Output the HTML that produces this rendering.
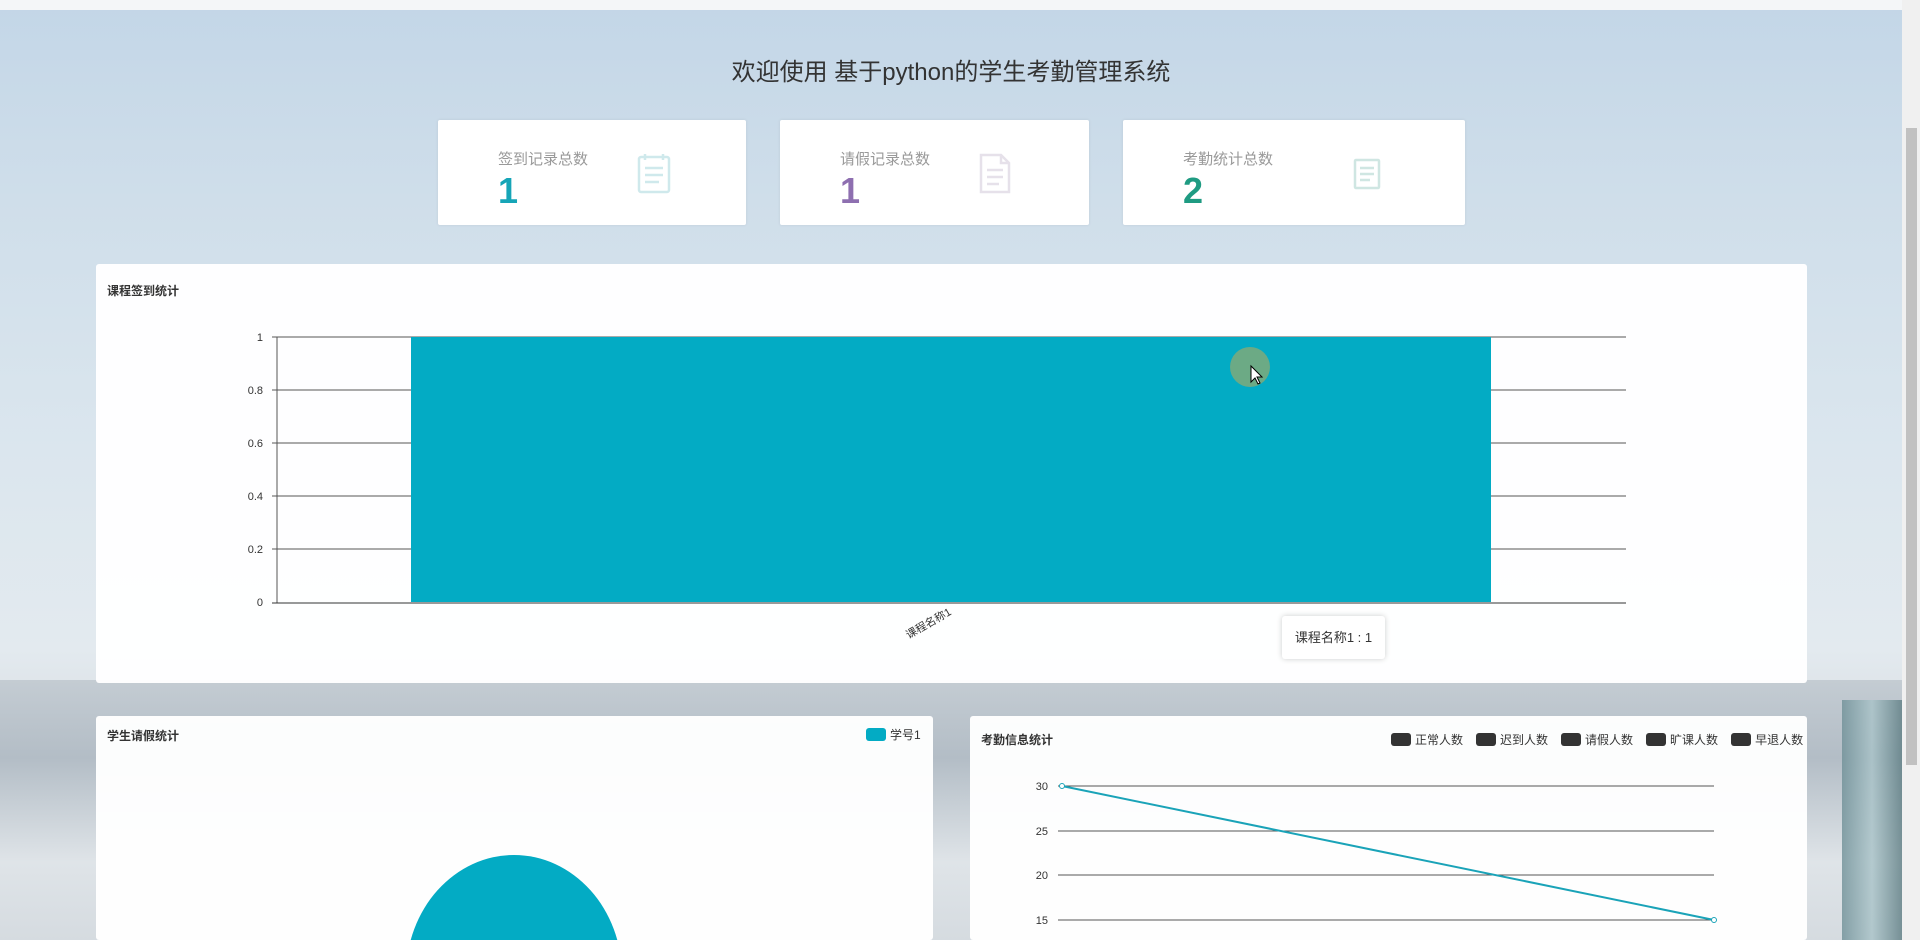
<!DOCTYPE html>
<html><head><meta charset="utf-8"><style>
*{margin:0;padding:0;box-sizing:border-box}
html,body{width:1920px;height:940px;overflow:hidden}
body{position:relative;font-family:"Liberation Sans","Noto Sans CJK SC",sans-serif;
background:linear-gradient(180deg,#c3d6e7 0px,#cfdeea 200px,#dbe6ee 450px,#e3eaef 650px,#dde3e8 700px,#d3d9de 940px)}
.top{position:absolute;left:0;top:0;width:1902px;height:10px;background:#f4f6f8}
.city{position:absolute;left:0;top:680px;width:1902px;height:260px;background:linear-gradient(180deg,#c4ccd3,#b3bdc6 30%,#dfe4e8 70%,#d5dbe0)}
.tw{position:absolute;right:18px;top:700px;width:60px;height:240px;background:linear-gradient(90deg,#6f9097,#a9c3c8,#5e7d83);opacity:.8}
h1{position:absolute;top:52px;left:0;width:1902px;text-align:center;font-size:24px;font-weight:normal;color:#333}
.card{position:absolute;top:120px;height:105px;background:#fff;border-radius:2px;box-shadow:0 0 3px rgba(0,0,0,.08)}
.card .l{position:absolute;left:60px;top:28px;font-size:15px;color:#999}
.card .n{position:absolute;left:60px;top:50px;font-size:36px;font-weight:bold}
.card svg{position:absolute;top:32px}
.panel{position:absolute;background:rgba(255,255,255,.96);border-radius:3px}
.pt{position:absolute;font-size:12px;font-weight:bold;color:#333}
.sb{position:absolute;right:0;top:0;width:18px;height:940px;background:#f0f0f0}
.sb div{position:absolute;left:4px;top:128px;width:11px;height:637px;background:#c1c1c1}
.lg{position:absolute;font-size:12px;color:#333;display:flex;align-items:center;white-space:nowrap}
.lg i{display:inline-block;width:20px;height:13px;border-radius:3px;background:#333;margin:0 4px 0 0}
.lg b{display:inline-block;width:13px}
</style></head><body>
<div class="top"></div>
<div class="city"></div>
<div class="tw"></div>
<h1>欢迎使用 基于python的学生考勤管理系统</h1>

<div class="card" style="left:438px;width:308px"><div class="l">签到记录总数</div><div class="n" style="color:#16a5b7">1</div>
<svg style="left:198px" width="36" height="42" viewBox="0 0 36 42" fill="none" stroke="#cfe9ec" stroke-width="2.5"><rect x="3" y="5" width="30" height="35" rx="2"/><path d="M9 2v6M27 2v6M9 16h18M9 23h18M9 30h14"/></svg></div>
<div class="card" style="left:780px;width:309px"><div class="l">请假记录总数</div><div class="n" style="color:#8e6fb0">1</div>
<svg style="left:198px" width="34" height="42" viewBox="0 0 34 42" fill="none" stroke="#e6e1ea" stroke-width="2.5"><path d="M3 3h20l8 8v29H3z M23 3v8h8 M9 18h16M9 25h16M9 32h12"/></svg></div>
<div class="card" style="left:1123px;width:342px"><div class="l">考勤统计总数</div><div class="n" style="color:#1f9b82">2</div>
<svg style="left:230px;top:38px" width="28" height="32" viewBox="0 0 28 32" fill="none" stroke="#cfe6e2" stroke-width="2.5"><rect x="2" y="2" width="24" height="28" rx="1"/><path d="M7 10h14M7 16h14M7 22h10"/></svg></div>

<div class="panel" style="left:96px;top:264px;width:1711px;height:419px">
<div class="pt" style="left:11px;top:18px">课程签到统计</div>
</div>
<svg style="position:absolute;left:0;top:0" width="1920" height="940">
<g stroke="#555" stroke-width="1">
<line x1="272" y1="337" x2="1626" y2="337"/><line x1="272" y1="390" x2="1626" y2="390"/><line x1="272" y1="443" x2="1626" y2="443"/><line x1="272" y1="496" x2="1626" y2="496"/><line x1="272" y1="549" x2="1626" y2="549"/>
<line x1="277" y1="337" x2="277" y2="603"/>
</g>
<rect x="411" y="337" width="1080" height="265" fill="#03abc4"/>
<line x1="272" y1="603" x2="1626" y2="603" stroke="#333"/>
<g font-size="11" fill="#333" text-anchor="end" font-family="Liberation Sans,sans-serif">
<text x="263" y="341">1</text><text x="263" y="394">0.8</text><text x="263" y="447">0.6</text><text x="263" y="500">0.4</text><text x="263" y="553">0.2</text><text x="263" y="606">0</text>
<text x="952" y="614" transform="rotate(-30 952 614)" font-family="Liberation Sans,Noto Sans CJK SC,sans-serif">课程名称1</text>
</g>
<circle cx="1250" cy="367" r="20" fill="#7fa97a" opacity=".85"/>
<path d="M1251 366l0 16 4-4 3 6 2-1-3-6 5 0z" fill="#fff" stroke="#000" stroke-width="1"/>
</svg>
<div style="position:absolute;left:1282px;top:616px;width:103px;height:43px;background:#fff;box-shadow:0 0 6px rgba(0,0,0,.2);border-radius:3px;font-size:13px;color:#333;line-height:43px;text-align:center">课程名称1 : 1</div>

<div class="panel" style="left:96px;top:716px;width:837px;height:224px">
<div class="pt" style="left:11px;top:11px">学生请假统计</div>
<div class="lg" style="left:770px;top:10px"><i style="background:#03abc4"></i>学号1</div>
</div>
<div class="panel" style="left:970px;top:716px;width:837px;height:224px">
<div class="pt" style="left:11px;top:15px">考勤信息统计</div>
<div class="lg" style="left:421px;top:15px"><i></i>正常人数<b></b><i></i>迟到人数<b></b><i></i>请假人数<b></b><i></i>旷课人数<b></b><i></i>早退人数</div>
</div>
<svg style="position:absolute;left:0;top:0" width="1920" height="940">
<ellipse cx="514" cy="975" rx="108" ry="120" fill="#03abc4"/>
<g stroke="#555"><line x1="1058" y1="786" x2="1714" y2="786"/><line x1="1058" y1="831" x2="1714" y2="831"/><line x1="1058" y1="875" x2="1714" y2="875"/><line x1="1058" y1="920" x2="1714" y2="920"/></g>
<line x1="1062" y1="786" x2="1714" y2="920" stroke="#1aa3b8" stroke-width="2"/>
<circle cx="1062" cy="786" r="2.5" fill="#fff" stroke="#1aa3b8"/><circle cx="1714" cy="920" r="2.5" fill="#fff" stroke="#1aa3b8"/>
<g font-size="11" fill="#333" text-anchor="end" font-family="Liberation Sans,sans-serif"><text x="1048" y="790">30</text><text x="1048" y="835">25</text><text x="1048" y="879">20</text><text x="1048" y="924">15</text></g>
</svg>
<div class="sb"><div></div></div>
</body></html>
